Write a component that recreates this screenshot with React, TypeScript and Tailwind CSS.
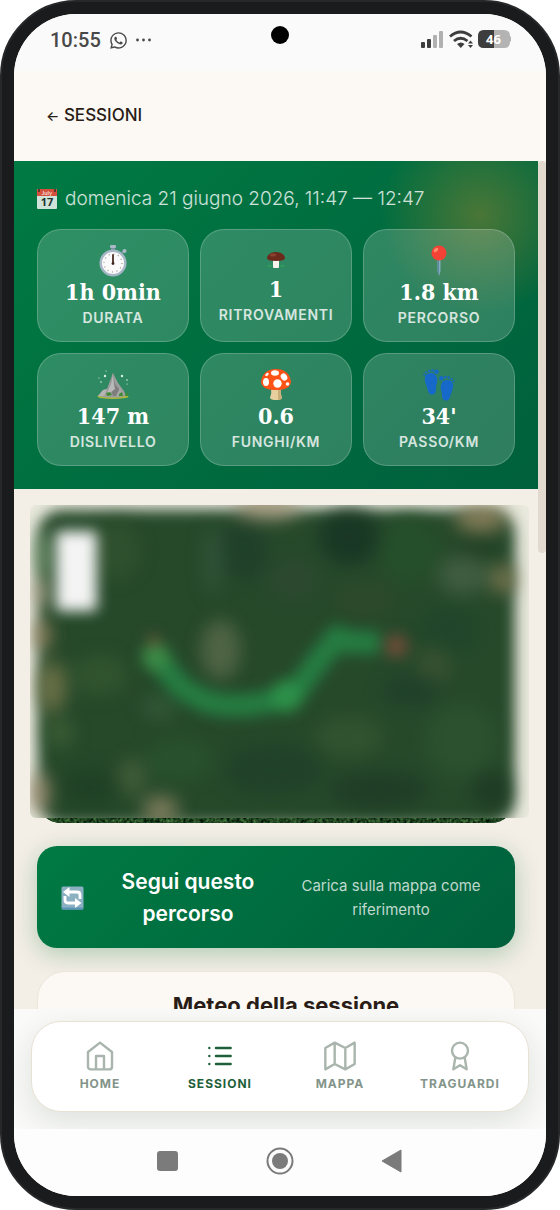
import type { ReactNode } from 'react';
import { FaWhatsapp } from 'react-icons/fa';

interface Stat {
  label: string;
  value: string;
  icon: ReactNode;
  small?: boolean;
}

interface Tab {
  label: string;
  active?: boolean;
  icon: ReactNode;
}

function StopwatchIcon() {
  return (
    <svg className="w-8 h-8" viewBox="0 0 32 32">
      <rect x="14" y="1" width="4" height="5" fill="#7d93a3" />
      <rect x="13" y="0" width="6" height="3" rx="1" fill="#a9bac6" />
      <path d="M25 8l3-3" stroke="#7d93a3" strokeWidth="2" />
      <circle cx="27.500" cy="6" r="2" fill="#a9bac6" />
      <circle cx="16" cy="18" r="12.300" fill="#fafafa" stroke="#a5b6c4" strokeWidth="2.500" />
      <circle cx="16" cy="18" r="9" fill="none" stroke="#9a8f8a" strokeWidth="1.200" strokeDasharray="1 3.710" />
      <path d="M16 10v8" stroke="#5d4037" strokeWidth="2" strokeLinecap="round" />
      <circle cx="16" cy="18.500" r="1.400" fill="#3e2723" />
    </svg>
  );
}

function PorciniIcon() {
  return (
    <svg className="w-6 h-6" viewBox="0 0 24 24">
      <path d="M4 18h3M17 18h3" stroke="#2fa35a" strokeWidth="1.500" strokeLinecap="round" />
      <path d="M9 11h6v8q0 1-1 1h-4q-1 0-1-1z" fill="#f7f3ec" />
      <path d="M3 10C4 2 20 2 21 10q0 3-9 3t-9-3z" fill="#6b2a1c" />
      <ellipse cx="9" cy="7" rx="3" ry="1.500" fill="#8d4332" />
    </svg>
  );
}

function PinIcon() {
  return (
    <svg className="w-8 h-8" viewBox="0 0 32 32">
      <path d="M14.500 14h3v12l-1.500 5-1.500-5z" fill="#82aec0" />
      <path d="M14.500 15h1.500v16l-1.500-5z" fill="#5f8aa0" />
      <circle cx="16" cy="8" r="7.500" fill="#f44336" />
      <ellipse cx="13" cy="5" rx="2.600" ry="1.700" fill="#ff8a65" transform="rotate(-40 13 5)" />
    </svg>
  );
}

function MountainIcon() {
  return (
    <svg className="w-8 h-8" viewBox="0 0 32 32">
      <ellipse cx="16" cy="27.500" rx="15.500" ry="2.500" fill="#a9b83a" />
      <path d="M1 27l5-6 4-1 6-16 5 10 6 8 2 5q-12 3-28 0z" fill="#9e9e9e" />
      <path d="M16 4l2 11 4 5 2 7h-8l-3-8z" fill="#7e7e7e" />
      <path d="M16 4l-2 11-5 12 9-7-1-5z" fill="#b9b9b9" />
      <path d="M1 27l5-6 4-1-3 7z" fill="#b4b4b4" />
      <path d="M19 27l4-8 3 8z" fill="#a9a9a9" />
      <path d="M9 24l4-1 2 3-5 1zM22 25l3-2 1 4h-4zM28 27l2-5 1 5z" fill="#3f8a35" />
      <g fill="#d8f0ea">
        <circle cx="8" cy="7" r="1.200" />
        <circle cx="25" cy="7" r="1.200" />
        <circle cx="4" cy="13" r=".8" />
        <circle cx="30" cy="11" r=".8" />
        <circle cx="30" cy="15" r=".6" />
        <circle cx="2" cy="9" r=".6" />
        <circle cx="9" cy="2" r=".6" />
      </g>
    </svg>
  );
}

function AmanitaIcon() {
  return (
    <svg className="w-8 h-8" viewBox="0 0 32 32">
      <path d="M11 18h10q-1 6 1 11-1 2-6 2t-6-2q2-5 1-11z" fill="#e6cf9c" />
      <path d="M18 20h3q-1 5 1 9-1 2-4 2z" fill="#c9ad77" />
      <path d="M1 13C2 4 8 0 16 0s14 4 15 13q-1 8-15 8T1 13z" fill="#ff5216" />
      <g fill="#fff">
        <ellipse cx="15" cy="4" rx="4" ry="2.800" />
        <ellipse cx="6" cy="13" rx="3" ry="4" />
        <circle cx="17.500" cy="14.500" r="4.200" />
        <ellipse cx="24" cy="8" rx="3" ry="3.800" transform="rotate(-35 24 8)" />
        <circle cx="27.500" cy="15" r="1.800" />
        <ellipse cx="7" cy="5.500" rx="2" ry="1.300" transform="rotate(-40 7 5.500)" />
      </g>
    </svg>
  );
}

function FeetIcon() {
  return (
    <svg className="w-8 h-8" viewBox="0 0 32 32" fill="#1769c9">
      <path d="M2 12c-1-6 2-8 6-8 5 0 7 5 6 10-1 3-1 4-1 7 0 6-7 6-8 1-1-4-2-6-3-10z" />
      <circle cx="13.500" cy="2.800" r="2.300" />
      <circle cx="9.500" cy="1.500" r="1.300" />
      <circle cx="6.300" cy="1.900" r="1.200" />
      <circle cx="3.200" cy="3.300" r="1.100" />
      <circle cx="1.300" cy="5.800" r="1" />
      <path d="M30 19c1-6-2-8-6-8-5 0-7 5-6 10 1 3 1 3 1 6 0 6 7 6 8 1 1-4 2-5 3-9z" />
      <circle cx="18.300" cy="9.300" r="2.300" />
      <circle cx="22.400" cy="8" r="1.300" />
      <circle cx="25.700" cy="8.500" r="1.200" />
      <circle cx="28.700" cy="10" r="1.100" />
      <circle cx="30.700" cy="12.300" r="1" />
    </svg>
  );
}

function CalendarIcon() {
  return (
    <svg className="w-5 h-5 shrink-0" viewBox="0 0 20 20">
      <rect width="20" height="20" rx="1" fill="#cfe3da" />
      <path d="M0 1q0-1 1-1h18q1 0 1 1v6H0z" fill="#d4503c" />
      <path d="M1 0h2v3H1zM17 0h2v3h-2z" fill="#5d3a30" />
      <text x="10" y="6" textAnchor="middle" fontSize="6" fontWeight="700" fill="#f3d9d0" fontFamily="Lato, sans-serif">
        July
      </text>
      <text x="10" y="17" textAnchor="middle" fontSize="11" fontWeight="700" fill="#22332b" fontFamily="Open Sans, sans-serif">
        17
      </text>
    </svg>
  );
}

function ReloadIcon() {
  return (
    <svg className="w-6 h-6 shrink-0" viewBox="0 0 24 24">
      <rect x=".5" y=".5" width="22" height="23" rx="1.500" fill="#8bb0c2" />
      <path d="M1 22.500h21" stroke="#5c93ba" strokeWidth="2" />
      <path d="M19 13V9q0-3-3-3H8" fill="none" stroke="#fff" strokeWidth="2.800" />
      <path d="M8.500 1v10L2 6z" fill="#fff" />
      <path d="M4 10v4q0 3 3 3h8" fill="none" stroke="#fff" strokeWidth="2.800" />
      <path d="M14 12v10l6.500-5z" fill="#fff" />
    </svg>
  );
}

const stats: Stat[] = [
  { label: 'DURATA', value: '1h 0min', icon: <StopwatchIcon /> },
  { label: 'RITROVAMENTI', value: '1', icon: <PorciniIcon />, small: true },
  { label: 'PERCORSO', value: '1.8 km', icon: <PinIcon /> },
  { label: 'DISLIVELLO', value: '147 m', icon: <MountainIcon /> },
  { label: 'FUNGHI/KM', value: '0.6', icon: <AmanitaIcon /> },
  { label: 'PASSO/KM', value: "34'", icon: <FeetIcon /> },
];

const tabs: Tab[] = [
  {
    label: 'HOME',
    icon: <path d="M3 9l9-7 9 7v11a2 2 0 0 1-2 2H5a2 2 0 0 1-2-2zM9 22V12h6v10" />,
  },
  {
    label: 'SESSIONI',
    active: true,
    icon: <path d="M9 6h11M9 12h11M9 18h11M4 6h.01M4 12h.01M4 18h.01" />,
  },
  {
    label: 'MAPPA',
    icon: <path d="M1 6v16l7-4 8 4 7-4V2l-7 4-8-4zM8 2v16M16 6v16" />,
  },
  {
    label: 'TRAGUARDI',
    icon: (
      <>
        <circle cx="12" cy="8" r="6" />
        <path d="M15.477 12.890 17 22l-5-3-5 3 1.523-9.110" />
      </>
    ),
  },
];

function StatusBar() {
  return (
    <div className="relative h-[57px] shrink-0 flex items-start justify-between bg-[#fafafa] pt-3 pl-9 pr-[35px] text-[#484848]">
      <div className="flex items-center gap-2 h-7">
        <span className="font-['Roboto',sans-serif] text-xl font-medium">10:55</span>
        <FaWhatsapp className="w-[19px] h-[19px]" />
        <svg className="w-4 h-4" viewBox="0 0 16 16" fill="currentColor">
          <circle cx="1.500" cy="8" r="1.400" />
          <circle cx="7.500" cy="8" r="1.400" />
          <circle cx="13.500" cy="8" r="1.400" />
        </svg>
      </div>
      <div className="absolute left-1/2 top-3 -translate-x-1/2 w-[18px] h-[18px] rounded-full bg-black" />
      <div className="flex items-center gap-[5px] h-[26px]">
        <svg className="w-6 h-[18px]" viewBox="0 0 24 18">
          <rect x="1" y="12" width="4" height="6" rx="1" fill="#3d3d3d" />
          <rect x="7" y="9" width="4" height="9" rx="1" fill="#3d3d3d" />
          <rect x="13" y="5" width="4" height="13" rx="1" fill="#b0b0b0" />
          <rect x="19" y="1" width="4" height="17" rx="1" fill="#b0b0b0" />
        </svg>
        <svg className="w-6 h-[18px]" viewBox="0 0 24 18" fill="none" stroke="#3d3d3d" strokeWidth="2.800">
          <path d="M1 6.500Q11.500-2.500 22.500 6.500M5 11q6.500-5.500 13.500 0" />
          <path d="M8 14q4-3 7.500 0l-3.700 4z" fill="#3d3d3d" stroke="none" />
          <path d="M21.500 10.500l2.500 3h-5zM21.500 18l2.500-3h-5z" fill="#3d3d3d" stroke="none" />
        </svg>
        <svg className="w-[33px] h-[18px]" viewBox="0 0 33 18">
          <path d="M6 0h20q6 0 6 6l1 1v4l-1 1q0 6-6 6H6q-6 0-6-6V6q0-6 6-6z" fill="#b3b3b3" />
          <path d="M6 0h10v18H6q-6 0-6-6V6q0-6 6-6z" fill="#3d3d3d" />
          <text x="15.500" y="14" textAnchor="middle" fontSize="13" fontWeight="700" fill="#fff" fontFamily="Open Sans, sans-serif">
            46
          </text>
        </svg>
      </div>
    </div>
  );
}

function StatCard({ stat }: { stat: Stat }) {
  return (
    <div className="flex flex-col items-center rounded-3xl border border-white/20 bg-white/18 pt-[15px] pb-3 text-white">
      <div className={`flex items-center justify-center ${stat.small ? 'h-[29px]' : 'h-8'}`}>{stat.icon}</div>
      <div className="font-['DejaVu_Serif_Condensed','DejaVu_Serif',serif] text-[23px] leading-[30px] font-bold">
        {stat.value}
      </div>
      <div className="text-sm leading-[22px] font-semibold tracking-wider text-white/80">{stat.label}</div>
    </div>
  );
}

function SessionMap() {
  return (
    <div className="relative mx-[23px] mt-6 h-[310px]">
      {/* satellite texture */}
      <svg className="w-full h-full rounded-3xl bg-[#1c4526]">
        <filter id="grass" x="0" y="0" width="100%" height="100%" colorInterpolationFilters="sRGB">
          <feTurbulence type="fractalNoise" baseFrequency="0.3" numOctaves="3" seed="4" />
          <feColorMatrix values="0.5 0 0 0 -0.12  0.7 0 0 0 -0.08  0.4 0 0 0 -0.07  0 0 0 0 1" />
        </filter>
        <rect width="100%" height="100%" filter="url(#grass)" />
      </svg>

      {/* privacy blur over the track */}
      <div className="absolute -top-2 -left-[7px] -right-[14px] bottom-[5px] rounded-md overflow-hidden bg-[#e9e9dd]">
        <svg className="w-full h-full" viewBox="0 0 500 313" preserveAspectRatio="none">
          <defs>
            <filter id="edge" x="-10%" y="-10%" width="120%" height="120%">
              <feGaussianBlur stdDeviation="7" />
            </filter>
            <filter id="soft" x="-10%" y="-10%" width="120%" height="120%" colorInterpolationFilters="sRGB">
              <feGaussianBlur stdDeviation="9" />
            </filter>
            <filter id="track" x="-20%" y="-30%" width="140%" height="160%" colorInterpolationFilters="sRGB">
              <feGaussianBlur stdDeviation="7" />
            </filter>
          </defs>
          <g filter="url(#edge)">
            <rect x="8" y="5" width="478" height="314" rx="24" fill="#27492a" />
          </g>
          <g filter="url(#soft)" opacity=".85">
            <ellipse cx="13" cy="50" rx="8" ry="24" fill="#6f946c" />
            <ellipse cx="10" cy="88" rx="8" ry="14" fill="#b9a78f" />
            <ellipse cx="12" cy="130" rx="9" ry="16" fill="#9c8461" />
            <ellipse cx="22" cy="182" rx="14" ry="26" fill="#77774c" />
            <ellipse cx="30" cy="228" rx="14" ry="14" fill="#3f6136" />
            <ellipse cx="10" cy="288" rx="10" ry="20" fill="#a08c70" />
            <ellipse cx="131" cy="305" rx="18" ry="14" fill="#8c8565" />
            <ellipse cx="102" cy="272" rx="14" ry="18" fill="#47603b" />
            <ellipse cx="238" cy="3" rx="34" ry="12" fill="#a09478" />
            <ellipse cx="452" cy="14" rx="26" ry="13" fill="#94845f" />
            <ellipse cx="474" cy="74" rx="12" ry="15" fill="#837a54" />
            <ellipse cx="434" cy="70" rx="26" ry="20" fill="#446044" />
            <ellipse cx="450" cy="42" rx="22" ry="10" fill="#203e24" />
            <ellipse cx="320" cy="32" rx="30" ry="28" fill="#173524" />
            <ellipse cx="215" cy="45" rx="24" ry="30" fill="#20402a" />
            <ellipse cx="183" cy="55" rx="10" ry="34" fill="#33553a" />
            <ellipse cx="265" cy="75" rx="26" ry="22" fill="#2d4931" />
            <ellipse cx="88" cy="45" rx="22" ry="30" fill="#32522f" />
            <ellipse cx="380" cy="45" rx="30" ry="34" fill="#25502b" />
            <ellipse cx="335" cy="95" rx="30" ry="20" fill="#2e4a2c" />
            <ellipse cx="420" cy="125" rx="30" ry="24" fill="#20452a" />
            <ellipse cx="404" cy="162" rx="18" ry="20" fill="#3a5332" />
            <ellipse cx="70" cy="170" rx="28" ry="20" fill="#33572f" />
            <ellipse cx="130" cy="202" rx="18" ry="12" fill="#355a3a" />
            <ellipse cx="320" cy="232" rx="34" ry="20" fill="#345530" />
            <ellipse cx="432" cy="235" rx="36" ry="36" fill="#2c5330" />
            <ellipse cx="350" cy="285" rx="50" ry="18" fill="#1f3b26" />
            <ellipse cx="462" cy="285" rx="18" ry="18" fill="#1d3823" />
            <ellipse cx="245" cy="265" rx="50" ry="26" fill="#204129" />
            <ellipse cx="150" cy="255" rx="34" ry="22" fill="#29532e" />
            <ellipse cx="60" cy="282" rx="30" ry="18" fill="#1f4025" />
            <ellipse cx="191" cy="145" rx="20" ry="30" fill="#57694a" />
            <ellipse cx="382" cy="185" rx="30" ry="16" fill="#20402a" />
          </g>
          <g filter="url(#track)">
            <rect x="26" y="26" width="41" height="80" rx="4" fill="#f4f4f4" />
            <path
              d="M124 152C138 160 142 178 156 185C172 196 184 202 220 200L259 193C272 184 282 160 306 136L350 138"
              fill="none"
              stroke="#257c42"
              strokeWidth="23"
              strokeLinejoin="round"
            />
            <circle cx="126" cy="152" r="14" fill="#3a8a46" />
            <circle cx="257" cy="191" r="16" fill="#2c9049" />
            <circle cx="308" cy="133" r="13" fill="#257c42" />
            <circle cx="124" cy="136" r="6" fill="#6e5437" />
            <circle cx="367" cy="141" r="12" fill="#6a4c38" />
          </g>
        </svg>
      </div>
    </div>
  );
}

function BottomNav() {
  return (
    <div className="relative z-10 h-[120px] shrink-0 overflow-hidden bg-[#fafaf8] px-[17px] pt-3">
      <nav className="flex h-[91px] rounded-[30px] border border-[#e8e2d4] bg-white px-2 shadow-[0_10px_30px_rgba(30,60,40,0.13)]">
        {tabs.map((tab) => (
          <a
            key={tab.label}
            href="#"
            className={`flex-1 flex flex-col items-center pt-[18px] text-xs leading-5 font-bold tracking-[1px] ${
              tab.active ? 'text-[#1e6039]' : 'text-[#83948a]'
            }`}
          >
            <svg
              className={`w-8 h-8 mb-[2px] ${tab.active ? '' : 'text-[#a9b5ad]'}`}
              viewBox="0 0 24 24"
              fill="none"
              stroke="currentColor"
              strokeWidth="1.800"
              strokeLinecap="round"
              strokeLinejoin="round"
            >
              {tab.icon}
            </svg>
            {tab.label}
          </a>
        ))}
      </nav>
    </div>
  );
}

function SystemBar() {
  return (
    <div className="flex h-[67px] shrink-0 justify-center gap-[84px] bg-[#fdfdfd] pt-[18px] text-[#7b7b7b]">
      <button aria-label="Recenti" className="h-7 w-7">
        <svg viewBox="0 0 28 28" fill="currentColor">
          <rect x="3" y="4" width="21" height="20" rx="3" />
        </svg>
      </button>
      <button aria-label="Home" className="h-7 w-7">
        <svg viewBox="0 0 28 28" fill="currentColor">
          <circle cx="14" cy="14" r="12.500" fill="none" stroke="currentColor" strokeWidth="2" />
          <circle cx="14" cy="14" r="8" />
        </svg>
      </button>
      <button aria-label="Indietro" className="h-7 w-7">
        <svg viewBox="0 0 28 28" fill="currentColor">
          <path d="M4 14 23 3v22z" stroke="currentColor" strokeLinejoin="round" />
        </svg>
      </button>
    </div>
  );
}

export default function App() {
  return (
    <div className="relative h-screen overflow-hidden rounded-[76px] border-2 border-[#26282a] bg-[#1a1b1d] p-3 font-['Inter',sans-serif]">
      {/* side keys */}
      <div className="absolute -right-[2px] top-[298px] h-32 w-[2px] bg-[#1a1b1d]" />
      <div className="absolute -right-[2px] top-[458px] h-[133px] w-[2px] bg-[#1a1b1d]" />

      <div className="flex h-full flex-col overflow-hidden rounded-[62px] bg-[#f3eee6]">
        <StatusBar />

        <header className="flex h-[90px] shrink-0 items-center bg-[#fcf9f4] px-8">
          <a href="#" className="text-[17px] font-medium text-[#2a1d17]">
            <span className="text-sm">←</span> SESSIONI
          </a>
        </header>

        <div className="flex min-h-0 flex-1">
          <main className="min-w-0 flex-1 overflow-hidden">
            <section className="bg-[radial-gradient(circle_at_calc(100%-58px)_54px,rgba(211,140,40,0.35),rgba(211,140,40,0)_100px),linear-gradient(135deg,#007a43,#00603c)] p-[23px]">
              <p className="mb-[15px] flex items-center gap-2 text-[19px] leading-[30px] font-light whitespace-nowrap text-white/80">
                <CalendarIcon />
                domenica 21 giugno 2026, 11:47 — 12:47
              </p>
              <div className="grid grid-cols-3 gap-[11px]">
                {stats.map((stat) => (
                  <StatCard key={stat.label} stat={stat} />
                ))}
              </div>
            </section>

            <SessionMap />

            <div className="px-[23px] pt-[23px]">
              <button className="flex w-full items-center rounded-[20px] bg-[linear-gradient(135deg,#007a43,#00603c)] px-6 pt-5 pb-[18px] text-white shadow-[0_6px_24px_rgba(0,110,50,0.28)]">
                <ReloadIcon />
                <span className="flex-1 px-6 text-[21px] leading-8 font-semibold">Segui questo percorso</span>
                <span className="w-[200px] text-[15px] leading-6 text-white/75">
                  Carica sulla mappa come riferimento
                </span>
              </button>

              <section className="mt-[23px] rounded-[28px] border border-[#ece6da] bg-[#fcf9f4] pt-[17px] pr-6 pb-10 pl-11">
                <h2 className="text-center text-[22px] leading-8 font-bold text-[#2a1d17]">Meteo della sessione</h2>
              </section>
            </div>
          </main>
          <div className="w-2 shrink-0">
            <div className="h-[392px] rounded-full bg-[#e2d9cf]" />
          </div>
        </div>

        <BottomNav />
        <SystemBar />
      </div>
    </div>
  );
}
